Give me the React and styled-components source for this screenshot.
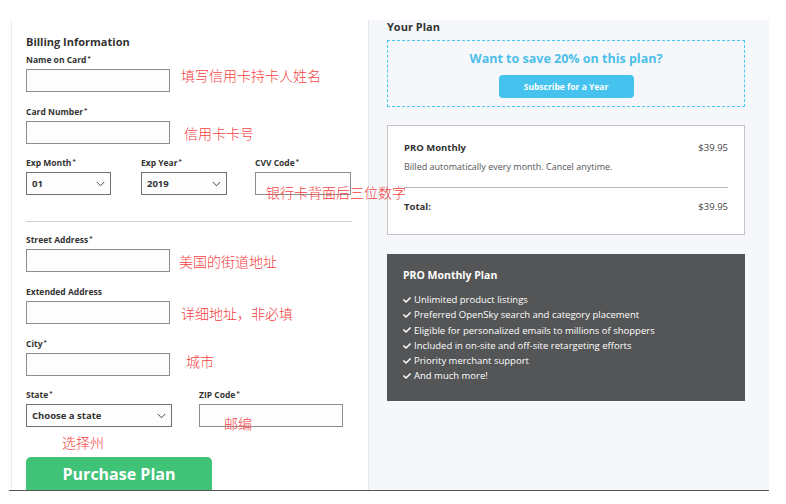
import React from "react";
import styled, { createGlobalStyle } from "styled-components";
import { FaCheck } from "react-icons/fa";

const GlobalStyle = createGlobalStyle`
  html, body { margin: 0; padding: 0; background: #fff; }
  body { font-family: "Open Sans", "Noto Sans", sans-serif; color: #333; }
  * { box-sizing: border-box; }
`;

const Frame = styled.div`
  margin: 20px 0 0 9px;
  width: 760px;
  height: 471px;
  border-bottom: 1px solid #555;
  display: grid;
  grid-template-columns: 359px 1fr;
  overflow: hidden;
`;

const FormPanel = styled.div`
  margin-left: 2px;
  border-left: 1px solid #ececec;
  padding: 15px 0 0 14px;
  background: #fff;
`;

const Heading = styled.h2`
  margin: 0;
  font-size: 11px;
  line-height: 14px;
  font-weight: 700;
  color: #333;
`;

const Field = styled.div`
  position: relative;
  margin-top: ${(p) => p.$top ?? 15}px;
`;

const Label = styled.div`
  font-size: 8.5px;
  line-height: 10px;
  font-weight: 700;
  color: #333;
  margin-bottom: 4px;
  white-space: nowrap;
  sup {
    font-size: 6px;
    vertical-align: top;
    line-height: 6px;
    margin-left: 1px;
  }
`;

const InputRow = styled.div`
  display: flex;
  align-items: center;
  gap: ${(p) => p.$gap || 11}px;
`;

const TextInput = styled.div`
  width: ${(p) => p.$w || 144}px;
  height: ${(p) => p.$h || 23}px;
  border: 1px solid #8d8d8d;
  background: #fdfdfd;
  flex-shrink: 0;
`;

const SelectBox = styled.div`
  width: ${(p) => p.$w}px;
  height: 23px;
  border: 1px solid #6f6f6f;
  background: #fdfdfd;
  display: flex;
  align-items: center;
  justify-content: space-between;
  padding: 0 5px 0 5px;
  font-size: 9.5px;
  font-weight: 700;
  color: #333;
  svg { flex-shrink: 0; }
`;

const Note = styled.span`
  font-family: "Noto Sans CJK SC", sans-serif;
  font-size: 14px;
  line-height: 16px;
  font-weight: 300;
  color: #f44242;
  white-space: nowrap;
  margin-top: ${(p) => p.$dy || 0}px;
`;

const FloatNote = styled(Note)`
  position: absolute;
  left: ${(p) => p.$x}px;
  top: ${(p) => p.$y}px;
  z-index: 2;
`;

const Row = styled.div`
  display: flex;
  gap: ${(p) => p.$gap}px;
  margin-top: 14px;
`;

const Divider = styled.hr`
  margin: 26px 0 0 0;
  width: 326px;
  border: 0;
  border-top: 1px solid #cfcfcf;
`;

const BuyButton = styled.button`
  margin-top: 30px;
  width: 186px;
  height: 40px;
  border: 0;
  border-radius: 5px;
  background: #40c377;
  color: #fff;
  font-family: inherit;
  font-size: 16px;
  font-weight: 700;
  padding: 0 0 6px;
`;

const PlanPanel = styled.div`
  background: #f6f7fb;
  border-left: 1px solid #e4e6ec;
  padding: 0 0 0 18px;
`;

const PlanTitle = styled.div`
  font-size: 11px;
  line-height: 14px;
  font-weight: 700;
  color: #333;
`;

const PromoBox = styled.div`
  margin-top: 6px;
  width: 358px;
  height: 67px;
  border: 1.5px dashed #4cc8f0;
  display: flex;
  flex-direction: column;
  align-items: center;
  padding-top: 10px;
`;

const PromoText = styled.div`
  font-size: 12.5px;
  line-height: 16px;
  font-weight: 700;
  color: #4cbfea;
`;

const PromoButton = styled.button`
  margin-top: 8px;
  width: 135px;
  height: 23px;
  border: 0;
  border-radius: 4px;
  background: #45c3ee;
  color: #fff;
  font-family: inherit;
  font-size: 8.5px;
  font-weight: 700;
`;

const Summary = styled.div`
  margin-top: 18px;
  width: 358px;
  height: 110px;
  background: #fff;
  border: 1px solid #c4c4c4;
  padding: 15px 16px 0;
`;

const SumLine = styled.div`
  display: flex;
  justify-content: space-between;
  font-size: 9.5px;
  line-height: 14px;
  font-weight: ${(p) => (p.$bold ? 700 : 400)};
  color: #333;
  span + span { font-weight: 400; color: #444; }
`;

const SumNote = styled.div`
  margin-top: 5px;
  font-size: 9px;
  line-height: 14px;
  color: #555;
`;

const SumRule = styled.div`
  margin: 13px 0 12px;
  border-top: 1px solid #b8b8b8;
`;

const DarkCard = styled.div`
  margin-top: 19px;
  width: 358px;
  height: 147px;
  background: #545556;
  color: #fff;
  padding: 14px 16px 0;
`;

const DarkTitle = styled.div`
  font-size: 10.5px;
  line-height: 14px;
  font-weight: 700;
  margin-bottom: 10px;
`;

const Perk = styled.div`
  display: flex;
  align-items: center;
  gap: 3px;
  font-size: 9.5px;
  line-height: 15.3px;
  svg { font-size: 8px; }
`;

const Chevron = () => (
  <svg width="9" height="6" viewBox="0 0 9 6" fill="none">
    <path d="M0.8 1L4.5 4.8L8.2 1" stroke="#444" strokeWidth="1" />
  </svg>
);

const Req = ({ children }) => (
  <Label>
    {children}
    <sup>*</sup>
  </Label>
);

const perks = [
  "Unlimited product listings",
  "Preferred OpenSky search and category placement",
  "Eligible for personalized emails to millions of shoppers",
  "Included in on-site and off-site retargeting efforts",
  "Priority merchant support",
  "And much more!",
];

export default function App() {
  return (
    <>
      <GlobalStyle />
      <Frame>
        <FormPanel>
          <Heading>Billing Information</Heading>

          <Field $top={6}>
            <Req>Name on Card</Req>
            <InputRow $gap={11}>
              <TextInput />
              <Note $dy={-11}>填写信用卡持卡人姓名</Note>
            </InputRow>
          </Field>

          <Field>
            <Req>Card Number</Req>
            <InputRow $gap={14}>
              <TextInput />
              <Note>信用卡卡号</Note>
            </InputRow>
          </Field>

          <Row $gap={30}>
            <Field $top={0}>
              <Req>Exp Month</Req>
              <SelectBox $w={85}>
                01
                <Chevron />
              </SelectBox>
            </Field>
            <Field $top={0}>
              <Req>Exp Year</Req>
              <SelectBox $w={86}>
                2019
                <Chevron />
              </SelectBox>
            </Field>
            <Field $top={0} style={{ marginLeft: -2 }}>
              <Req>CVV Code</Req>
              <TextInput $w={96} />
              <FloatNote $x={11} $y={26}>银行卡背面后三位数字</FloatNote>
            </Field>
          </Row>

          <Divider />

          <Field $top={13}>
            <Req>Street Address</Req>
            <InputRow $gap={9}>
              <TextInput />
              <Note>美国的街道地址</Note>
            </InputRow>
          </Field>

          <Field>
            <Label>Extended Address</Label>
            <InputRow $gap={11}>
              <TextInput />
              <Note>详细地址，非必填</Note>
            </InputRow>
          </Field>

          <Field>
            <Req>City</Req>
            <InputRow $gap={16}>
              <TextInput />
              <Note $dy={-8}>城市</Note>
            </InputRow>
          </Field>

          <Row $gap={27}>
            <Field $top={0}>
              <Req>State</Req>
              <SelectBox $w={146}>
                Choose a state
                <Chevron />
              </SelectBox>
              <FloatNote $x={36} $y={44}>选择州</FloatNote>
            </Field>
            <Field $top={0}>
              <Req>ZIP Code</Req>
              <TextInput $w={144} />
              <FloatNote $x={25} $y={25}>邮编</FloatNote>
            </Field>
          </Row>

          <BuyButton>Purchase Plan</BuyButton>
        </FormPanel>

        <PlanPanel>
          <PlanTitle>Your Plan</PlanTitle>
          <PromoBox>
            <PromoText>Want to save 20% on this plan?</PromoText>
            <PromoButton>Subscribe for a Year</PromoButton>
          </PromoBox>

          <Summary>
            <SumLine $bold>
              <span>PRO Monthly</span>
              <span>$39.95</span>
            </SumLine>
            <SumNote>Billed automatically every month. Cancel anytime.</SumNote>
            <SumRule />
            <SumLine $bold>
              <span>Total:</span>
              <span>$39.95</span>
            </SumLine>
          </Summary>

          <DarkCard>
            <DarkTitle>PRO Monthly Plan</DarkTitle>
            {perks.map((p) => (
              <Perk key={p}>
                <FaCheck />
                {p}
              </Perk>
            ))}
          </DarkCard>
        </PlanPanel>
      </Frame>
    </>
  );
}
